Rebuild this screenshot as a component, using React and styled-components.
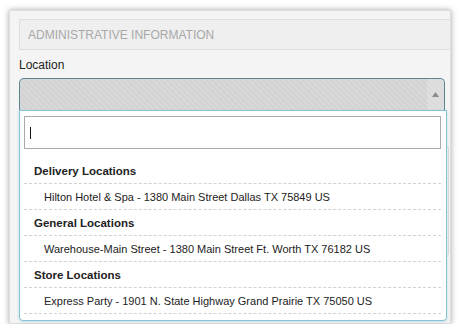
import React from 'react'
import styled, { createGlobalStyle } from 'styled-components'

const GlobalStyle = createGlobalStyle`
    html, body {
        margin: 0;
        padding: 0;
        background: #ffffff;
        font-family: "Liberation Sans", Arial, sans-serif;
    }
    * {
        box-sizing: border-box;
    }
`

const groups = [
    {
        title: 'Delivery Locations',
        items: ['Hilton Hotel & Spa - 1380 Main Street Dallas TX 75849 US'],
    },
    {
        title: 'General Locations',
        items: ['Warehouse-Main Street - 1380 Main Street Ft. Worth TX 76182 US'],
    },
    {
        title: 'Store Locations',
        items: ['Express Party - 1901 N. State Highway Grand Prairie TX 75050 US'],
    },
]

const App = () => {
    return (
        <>
            <GlobalStyle />
            <Card>
                <SectionHeader>Administrative Information</SectionHeader>
                <Label>Location</Label>
                <SelectWrap>
                    <SelectBox>
                        <Arrow>
                            <svg width="7" height="5" viewBox="0 0 7 5">
                                <path d="M3.5 0 L7 5 L0 5 Z" fill="#8a8a8a" />
                            </svg>
                        </Arrow>
                    </SelectBox>
                    <Dropdown>
                        <Search>
                            <Caret />
                        </Search>
                        <List>
                            {groups.map((g) => (
                                <React.Fragment key={g.title}>
                                    <Row $group>{g.title}</Row>
                                    {g.items.map((item) => (
                                        <Row key={item}>{item}</Row>
                                    ))}
                                </React.Fragment>
                            ))}
                        </List>
                    </Dropdown>
                </SelectWrap>
                <HiddenPanel />
            </Card>
        </>
    )
}

const Card = styled.div`
    margin: 10px 0 0 9px;
    width: 442px;
    height: 314px;
    border: 1px solid #dcdcdc;
    background: #f4f4f4;
    box-shadow: 0 0 6px rgba(0, 0, 0, 0.35);
    padding: 8px 0 0 9px;
    display: flex;
    flex-direction: column;
`

const SectionHeader = styled.div`
    height: 31px;
    border: 1px solid #dedede;
    border-right: none;
    background: #efefef;
    padding-left: 8px;
    display: flex;
    align-items: center;
    color: #a8a8a8;
    font-size: 12px;
    text-transform: uppercase;
`

const Label = styled.div`
    margin-top: 8px;
    font-size: 12px;
    line-height: 14px;
    color: #222;
`

const SelectWrap = styled.div`
    position: relative;
    margin-top: 6px;
    width: 426px;
`

const SelectBox = styled.div`
    height: 32px;
    border: 1px solid #5b8595;
    border-bottom: none;
    border-radius: 5px 5px 0 0;
    background: repeating-linear-gradient(
        45deg,
        #d3d3d3 0px,
        #d3d3d3 2px,
        #d8d8d8 2px,
        #d8d8d8 4px
    );
    display: flex;
    justify-content: flex-end;
`

const Arrow = styled.div`
    width: 17px;
    display: flex;
    align-items: center;
    justify-content: center;
    background: rgba(255, 255, 255, 0.2);
    border-radius: 0 4px 0 0;
`

const Dropdown = styled.div`
    position: absolute;
    top: 32px;
    left: 0;
    width: 428px;
    height: 211px;
    background: #fff;
    border: 1px solid #86c3d8;
    border-radius: 0 0 4px 4px;
    box-shadow: 0 1px 3px rgba(100, 170, 200, 0.35);
    padding: 5px 5px 6px 4px;
    z-index: 2;
`

const Search = styled.div`
    height: 33px;
    border: 1px solid #aaaaaa;
    display: flex;
    align-items: center;
    padding-left: 5px;
`

const Caret = styled.span`
    width: 1px;
    height: 12px;
    background: #111;
`

const List = styled.div`
    margin-top: 9px;
    display: flex;
    flex-direction: column;
`

const Row = styled.div`
    height: 26px;
    border-bottom: 1px dashed #d2d2d2;
    display: flex;
    align-items: center;
    padding-left: ${(p) => (p.$group ? '10px' : '20px')};
    font-size: ${(p) => (p.$group ? '11.5px' : '11px')};
    font-weight: ${(p) => (p.$group ? 'bold' : 'normal')};
    color: #222;
    white-space: nowrap;
`

const HiddenPanel = styled.div`
    margin-top: 37px;
    width: 430px;
    height: 108px;
    border: 1px solid #dcdcdc;
    background: #f4f4f4;
`

export default App
